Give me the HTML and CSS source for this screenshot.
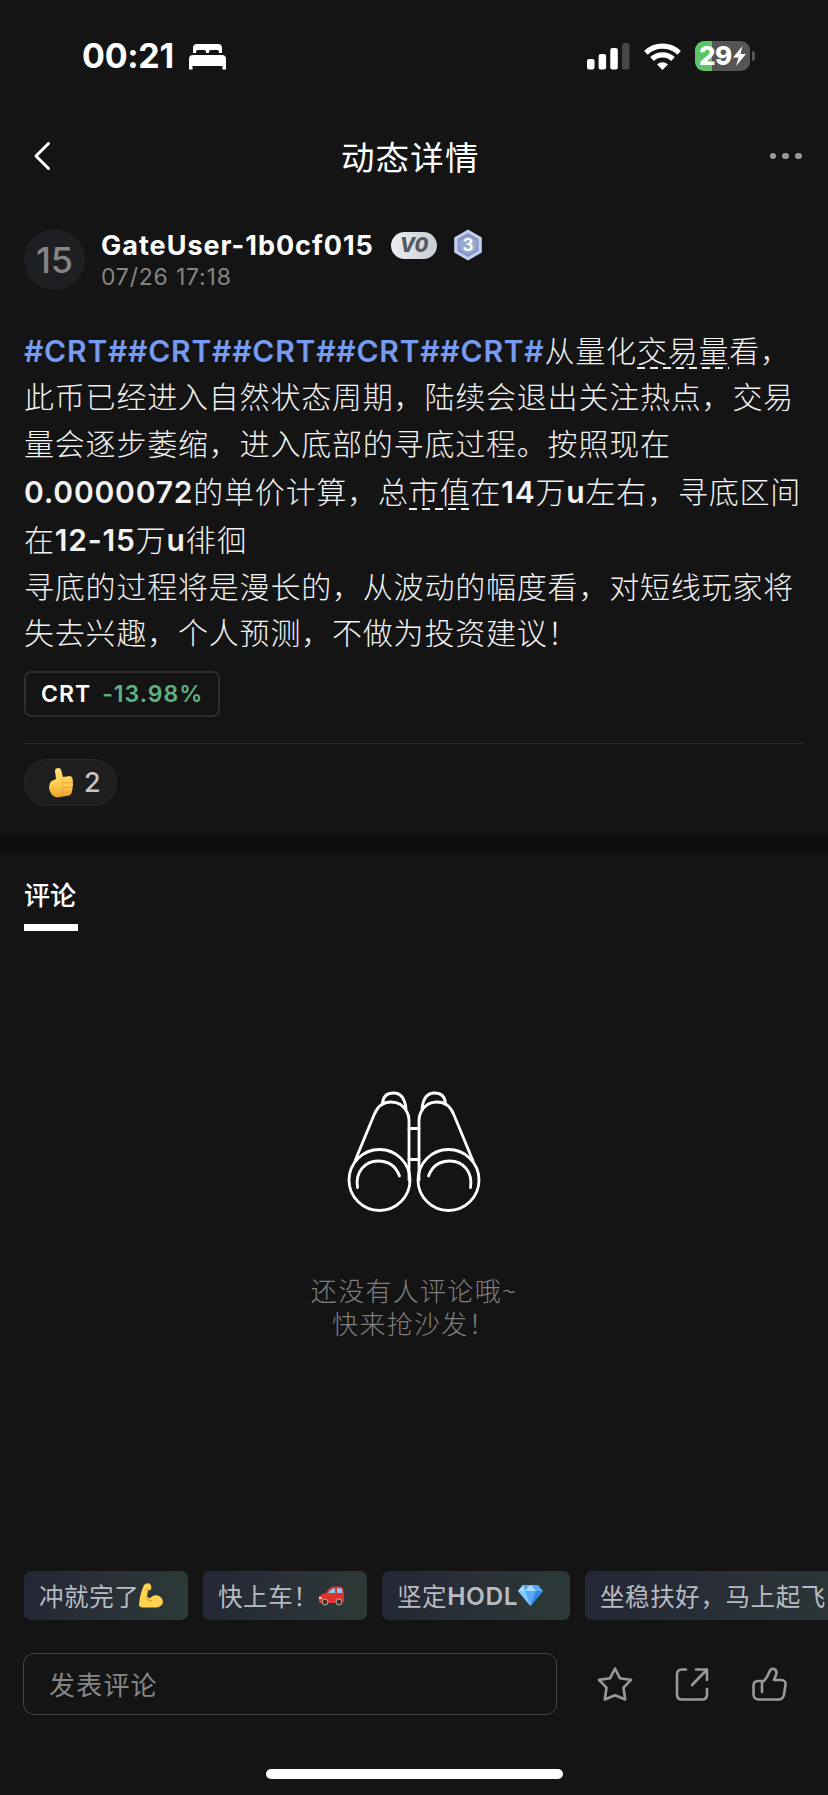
FILE: index.html
```html
<!DOCTYPE html>
<html lang="zh-CN">
<head>
<meta charset="utf-8">
<title>动态详情</title>
<link rel="stylesheet" href="styles.css">
</head>
<body>
<div class="screen">
  <div class="status">
    <span class="clock">00:21</span>
    <svg class="bed" width="38" height="26" viewBox="0 0 38 26"><path fill="#fff" d="M4 9V4q0-4 4-4h21q4 0 4 4v5h-3V8q0-2-2-2h-6q-2 0-2 2v1h-3V8q0-2-2-2H9Q7 6 7 8v1zM0 25.500V15q0-4 4-4h29q4 0 4 4v10.500h-3.500V22h-30v3.500z"/></svg>
    <svg class="signal" width="43" height="27" viewBox="0 0 43 27"><rect y="16" width="7.500" height="10.500" rx="2" fill="#fff"/><rect x="11.600" y="11" width="7.500" height="15.500" rx="2" fill="#fff"/><rect x="23.300" y="5" width="7.500" height="21.500" rx="2" fill="#fff"/><rect x="35" width="7.500" height="26.500" rx="2" fill="#464646"/></svg>
    <svg class="wifi" width="37" height="27" viewBox="0 0 37 27"><g fill="none" stroke="#fff" stroke-width="5.200"><path d="M1.900 9.800a24 24 0 0 1 33.200 0"/><path d="M8 16a15.200 15.200 0 0 1 21 0"/></g><path fill="#fff" d="M18.500 27 13 21.400a7.800 7.800 0 0 1 11 0z"/></svg>
    <div class="battery"><span>29</span><svg width="13" height="20" viewBox="0 0 13 20"><path fill="#fff" d="M9.500 0 0 11.500h5.500L3 20l10-12H7.500z"/></svg></div>
    <i class="battery-cap"></i>
  </div>

  <header class="nav">
    <svg class="back" width="18" height="30" viewBox="0 0 18 30"><path d="M15.500 2.500 3 15l12.500 12.500" fill="none" stroke="#fff" stroke-width="3" stroke-linecap="round" stroke-linejoin="round"/></svg>
    <h1>动态详情</h1>
    <div class="more"><i></i><i></i><i></i></div>
  </header>

  <section class="author">
    <div class="avatar">15</div>
    <div class="who">
      <div class="name-row">
        <span class="name">GateUser-1b0cf015</span>
        <span class="vip">V0</span>
        <svg width="30" height="32" viewBox="0 0 30 32"><path fill="#c3cfee" d="M15 .5 28.800 8.500v15L15 31.500 1.200 23.500v-15z"/><path fill="#8496c3" d="M15 4 25.500 10v12L15 28 4.500 22V10z"/><path fill="#97a9d2" d="M15 6.500 23.500 11.500v9L15 25.500 6.500 20.500v-9z"/><text class="level" x="15" y="21.500" text-anchor="middle">3</text></svg>
      </div>
      <div class="date">07/26 17:18</div>
    </div>
  </section>

  <article class="post">
    <p class="line"><span class="hash">#CRT##CRT##CRT##CRT##CRT#</span>从量化<span class="term">交易量</span>看，</p>
    <p class="line">此币已经进入自然状态周期，陆续会退出关注热点，交易</p>
    <p class="line tall">量会逐步萎缩，进入底部的寻底过程。按照现在</p>
    <p class="line taller"><b>0.0000072</b>的单价计算，总<span class="term">市值</span>在<b>14</b>万<b>u</b>左右，寻底区间</p>
    <p class="line tall">在<b>12-15</b>万<b>u</b>徘徊</p>
    <p class="line">寻底的过程将是漫长的，从波动的幅度看，对短线玩家将</p>
    <p class="line">失去兴趣，个人预测，不做为投资建议！</p>
    <div class="coin"><span class="sym">CRT</span><span class="pct">-13.98%</span></div>
    <div class="reactions">
      <div class="like">
        <svg width="24" height="30" viewBox="0 0 24 30"><defs><linearGradient id="skin" x1="0" y1="0" x2="0" y2="1"><stop offset="0" stop-color="#ffe07a"/><stop offset=".6" stop-color="#fcc94b"/><stop offset="1" stop-color="#eda130"/></linearGradient></defs><path fill="url(#skin)" d="M6 3q0-3 3.500-3Q12 0 12.500 3.500L14 9l7-1q3 .5 2.500 3.500.8 1.500.2 3.500.6 2-.2 4 .5 2-.5 3.500 0 4-3 5L8 29.500q-5-1-7-6-2.500-7 1.500-10.500L7 11z"/><path d="M14 10q-2 2 0 4.500 5 1 9-.500M13 19q5 1.500 10 0M13 24q5 1 10-.500M13.500 14v14" fill="none" stroke="#dd9a31" stroke-width=".9" opacity=".65"/></svg>
        <span>2</span>
      </div>
    </div>
  </article>

  <div class="band"></div>

  <section class="comments">
    <div class="tab">评论</div>
    <div class="empty">
      <svg width="134" height="121" viewBox="0 0 134 121" fill="none" stroke="#fff" stroke-width="2.800" stroke-linecap="round"><circle cx="32.500" cy="89" r="30.500"/><circle cx="101.500" cy="89" r="30.500"/><path d="M8 70 27 24q5-13 17-13 11 0 16 10 2 4 2 8v60M126 70 107 24q-5-13-17-13-11 0-16 10-2 4-2 8v60"/><path d="M35.500 12q1-10 11-10 11 0 12.500 16M98.500 12q-1-10-11-10-11 0-12.500 16"/><path d="M62 37.500h10M62 68.500h10"/><path d="M10.500 96.500C8 81 18 70 31 70q16 0 21.500 15M123.500 96.500C126 81 116 70 103 70q-16 0-21.500 15"/></svg>
      <p>还没有人评论哦~</p>
      <p>快来抢沙发！</p>
    </div>
  </section>

  <footer class="dock">
    <div class="chips">
      <div class="chip c1">冲就完了<svg width="24" height="26" viewBox="0 0 24 26"><path fill="#fed34d" d="M5 2q3-3 6-1 2 2 1 5-1 2-3 1.500l-1 6q2 1 3 2 3-4 8-3 5 2 5 7-1 4-6 5H4q-4 0-4-3Q1 10 5 2z"/><path d="M8 13q0 5 5 5M7 6l3 1" fill="none" stroke="#c8892c" stroke-width="1"/></svg></div>
      <div class="chip c2">快上车！<svg width="27" height="20" viewBox="0 0 27 20"><path fill="#df332f" d="M1 11q1-3 7-4 3-6 8-6.500 7-1 9 1.500 1.500 5 1 13l-2 2H2q-2-2-1-6z"/><path fill="#86c9e8" d="M10 7q3-4.500 7-5v5zM19 2q4-.5 5 1l.5 4H19z"/><path fill="#ffd29a" d="M1 11h3v2H1z"/><g fill="#41362f" stroke="#b5b0a8" stroke-width="1"><circle cx="7" cy="16" r="3"/><circle cx="21" cy="16" r="3"/></g></svg></div>
      <div class="chip c3">坚定<b>HODL</b><svg width="25" height="21" viewBox="0 0 25 21"><path fill="#58aaf5" d="M5 0h15l5 6-12.500 15L0 6z"/><path fill="#a9dcfc" d="M5 0 0 6h7zM12.500 0 7 6h11z"/><path fill="#85c8fa" d="m7 6 5.500 15L0 6z"/><path fill="#3187e5" d="m18 6-5.500 15L25 6z"/></svg></div>
      <div class="chip c4">坐稳扶好，马上起飞</div>
    </div>
    <div class="compose">
      <div class="field">发表评论</div>
      <svg class="act" width="36" height="36" viewBox="0 0 36 36"><path d="m18 2.500 5 9.800 11 1.600-7.500 7.800 1.700 11.800L18 29.200 7.800 33.500 9.500 21.700 2 13.900l11-1.600z"/></svg>
      <svg class="act" width="36" height="36" viewBox="0 0 36 36"><path d="M12 3.500H8q-5 0-5 5v20q0 5 5 5h20q5 0 5-5V23M22 3.500h11V14M33 3.500 18 19"/></svg>
      <svg class="act" width="36" height="36" viewBox="0 0 36 36"><path d="M11 26V15h2q3.500-4 5.500-9.500Q20 2 23 3q3.500 1.500 2 6L23 14h7q5 0 4.500 5l-1.500 9.500q-1 5-5.500 5H8q-5.500 0-5.500-5.500v-8Q2.500 15 7 15h4"/></svg>
    </div>
    <div class="home"></div>
  </footer>
</div>
</body>
</html>
```
FILE: styles.css
```css
* { box-sizing: border-box; }
body { margin: 0; background: #141414; }
h1, p { margin: 0; }
svg { display: block; flex: none; }

.screen {
  width: 828px;
  height: 1795px;
  overflow: hidden;
  display: flex;
  flex-direction: column;
  background: #141414;
  color: #fff;
  font-family: Inter, "Noto Sans CJK SC", sans-serif;
}

.status { height: 112px; padding-left: 82px; display: flex; align-items: center; flex: none; }
.clock { width: 107px; font-size: 34px; font-weight: 700; letter-spacing: -.3px; white-space: nowrap; line-height: 40px; }
.bed { margin-top: 1px; }
.signal { margin-left: 360px; }
.wifi { margin-left: 14px; }
.battery {
  margin-left: 14px; width: 55px; height: 30px; border-radius: 9px; padding-left: 4px;
  display: flex; align-items: center; gap: 1px;
  background: linear-gradient(90deg, #5fc466 0 16.500px, #555 16.500px);
  font-size: 26px; font-weight: 800; line-height: 30px; letter-spacing: -.5px;
}
.battery-cap { width: 3px; height: 10px; margin-left: 2px; border-radius: 0 4px 4px 0; background: #555; }

.nav { height: 88px; padding: 0 26px 0 33px; display: flex; align-items: center; justify-content: space-between; flex: none; }
.nav h1 { font: 400 33.500px/44px "Noto Sans CJK SC", sans-serif; letter-spacing: 1.200px; }
.more { display: flex; gap: 6px; }
.more i { width: 6.800px; height: 6.800px; border-radius: 50%; background: #999; }

.author { height: 128px; padding: 29px 24px 0; display: flex; gap: 16px; flex: none; }
.avatar { width: 61px; height: 61px; border-radius: 50%; background: #1e1f22; color: #858585; font-size: 36px; font-weight: 500; line-height: 62px; text-align: center; }
.name-row { display: flex; align-items: center; height: 32px; }
.name { width: 290px; font-size: 27px; font-weight: 700; letter-spacing: 1px; white-space: nowrap; }
.vip { width: 46px; height: 27px; margin-right: 16px; border-radius: 14px; background: linear-gradient(90deg, #eceef1, #c8ccd3); color: #555962; font-size: 20px; font-weight: 800; font-style: italic; line-height: 27px; text-align: center; }
.level { font: 700 17px Inter, sans-serif; fill: #fff; }
.date { color: #858585; font-size: 23px; line-height: 32px; letter-spacing: .8px; }

.post { padding: 0 24px; height: 508px; flex: none; }
.line { height: 46.300px; line-height: 46.300px; font-size: 30px; font-weight: 300; letter-spacing: .8px; white-space: nowrap; color: #f2f2f2; }
.line b { font-weight: 600; }
.tall { height: 47px; line-height: 47px; }
.taller { height: 49px; line-height: 49px; }
.hash { color: #769bf2; font-weight: 600; }
.term { background: repeating-linear-gradient(90deg, #eee 0 8px, transparent 8px 13px) 0 100% / 100% 2px no-repeat; }
.coin { width: 196px; height: 46px; margin-top: 15px; border: 2px solid #2d2d2d; border-radius: 7px; padding-left: 15px; display: flex; gap: 11px; align-items: center; font-size: 23px; font-weight: 600; letter-spacing: 1px; }
.pct { color: #5fb184; }
.reactions { margin-top: 26px; padding-top: 15px; border-top: 1.500px solid #282828; }
.like { width: 93px; height: 47px; padding-left: 24px; border: 1px solid #2b2b2b; border-radius: 24px; background: #1e1e1e; display: flex; align-items: center; gap: 11px; color: #c4c4c4; font-size: 27px; font-weight: 500; }

.band { height: 16px; background: #0e0e0e; flex: none; }

.comments { height: 719px; padding-left: 24px; flex: none; }
.tab { width: 54px; height: 79px; padding-top: 22px; border-bottom: 7px solid #fff; font: 500 26px/40px "Noto Sans CJK SC", sans-serif; }
.empty { display: flex; flex-direction: column; align-items: center; padding: 160px 24px 0 0; color: #7f7f7f; font: 300 26px/32.500px "Noto Sans CJK SC", sans-serif; letter-spacing: 1.300px; }
.empty svg { margin-bottom: 62px; }

.dock { flex: 1; }
.chips { display: flex; gap: 15px; padding-left: 24px; }
.chip { height: 49px; flex: none; padding-left: 15px; display: flex; align-items: center; border-radius: 7px; background: linear-gradient(100deg, #242635, #2d3a38); color: #b8bbc2; font-size: 24.500px; letter-spacing: .6px; white-space: nowrap; }
.chip b { font-weight: 600; }
.c1, .c2 { width: 164px; }
.c3 { width: 188px; }
.c4 { width: 310px; }
.compose { display: flex; align-items: center; margin-top: 33px; padding-left: 23px; }
.field { width: 547px; height: 62px; margin-right: 40px; padding-left: 25px; border: 1px solid #444; border-radius: 11px; color: #868686; font: 400 26px/60px "Noto Sans CJK SC", sans-serif; letter-spacing: 1.200px; }
.act { margin-right: 41px; fill: none; stroke: #999; stroke-width: 2.600; stroke-linejoin: round; stroke-linecap: round; }
.home { width: 297px; height: 10px; margin: 54px 0 0 266px; border-radius: 5px; background: #fff; }
```
